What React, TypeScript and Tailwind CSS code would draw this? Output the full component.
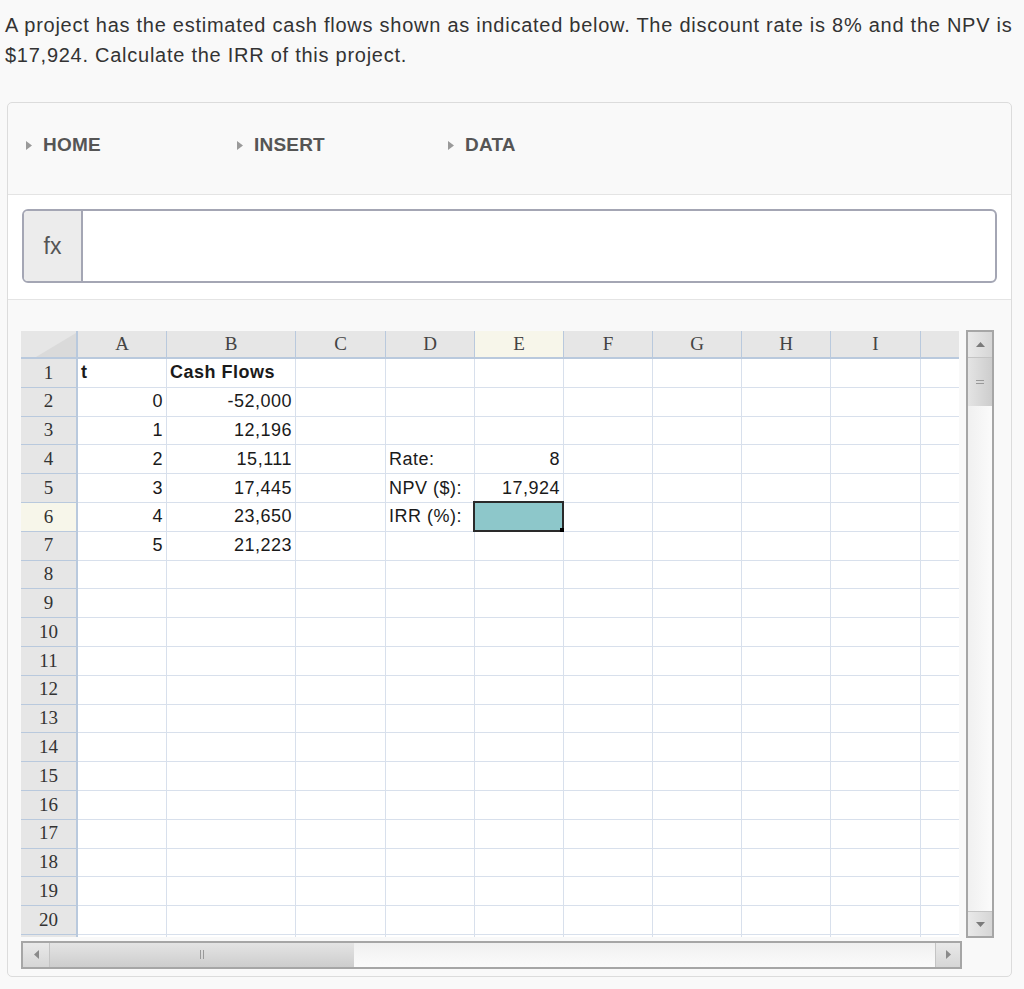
import React from 'react';

const colWidths = [57, 89, 129, 90, 89, 89, 89, 89, 89, 90, 38];
const colLabels = ['', 'A', 'B', 'C', 'D', 'E', 'F', 'G', 'H', 'I', ''];

type Cell = { text: string; align?: 'left' | 'right'; bold?: boolean };

const data: Record<string, Cell> = {
  '1-1': { text: 't', bold: true },
  '1-2': { text: 'Cash Flows', bold: true },
  '2-1': { text: '0', align: 'right' },
  '2-2': { text: '-52,000', align: 'right' },
  '3-1': { text: '1', align: 'right' },
  '3-2': { text: '12,196', align: 'right' },
  '4-1': { text: '2', align: 'right' },
  '4-2': { text: '15,111', align: 'right' },
  '5-1': { text: '3', align: 'right' },
  '5-2': { text: '17,445', align: 'right' },
  '6-1': { text: '4', align: 'right' },
  '6-2': { text: '23,650', align: 'right' },
  '7-1': { text: '5', align: 'right' },
  '7-2': { text: '21,223', align: 'right' },
  '4-4': { text: 'Rate:' },
  '4-5': { text: '8', align: 'right' },
  '5-4': { text: 'NPV ($):' },
  '5-5': { text: '17,924', align: 'right' },
  '6-4': { text: 'IRR (%):' },
};

const Tab = ({ label }: { label: string }) => (
  <div className="flex w-[211px] items-center">
    <svg width="6" height="9" viewBox="0 0 6 9" className="shrink-0">
      <polygon points="0,0 6,4.5 0,9" fill="#9a9a9a" />
    </svg>
    <span className="ml-[11px] text-[19px] font-bold text-[#555] leading-[22px] tracking-[0.2px]">{label}</span>
  </div>
);

const HeaderRow = () => (
  <>
    {colLabels.map((l, i) => {
      if (i === 0) {
        return (
          <div key={i} className="relative bg-[#e6e6e6] border-r-2 border-b-2 border-[#b9c9dd]">
            <svg className="absolute right-0 bottom-0" width="40" height="24" viewBox="0 0 40 24">
              <polygon points="40,0 40,24 0,24" fill="#dadada" />
            </svg>
          </div>
        );
      }
      return (
        <div
          key={i}
          className={`flex items-center justify-center border-b-2 border-[#b9c9dd] ${i < 10 ? 'border-r border-r-[#b9c9dd]' : ''} ${l === 'E' ? 'bg-[#f7f6ea]' : 'bg-[#e6e6e6]'} font-['Liberation_Serif',serif] text-[19px] text-[#444]`}
        >
          {l}
        </div>
      );
    })}
  </>
);

const DataRow = ({ r }: { r: number }) => (
  <>
    {colWidths.map((_, c) => {
      if (c === 0) {
        return (
          <div
            key={c}
            className={`flex items-center justify-center border-r-2 border-b border-[#b9c9dd] ${r === 6 ? 'bg-[#f7f6ea]' : 'bg-[#e6e6e6]'} font-['Liberation_Serif',serif] text-[19px] text-[#333]`}
          >
            {r}
          </div>
        );
      }
      const cell = data[`${r}-${c}`];
      const selected = r === 6 && c === 5;
      return (
        <div
          key={c}
          className={`relative flex items-center overflow-visible bg-white ${c < 10 ? 'border-r' : ''} border-b border-[#d8e0ec] px-[3px] ${cell?.align === 'right' ? 'justify-end' : 'justify-start'}`}
        >
          {cell && (
            <span className={`whitespace-nowrap text-[18px] tracking-[0.5px] text-[#1a1a1a] ${cell.bold ? 'font-bold' : ''}`}>
              {cell.text}
            </span>
          )}
          {selected && (
            <div className="absolute -left-[2px] -top-[2px] -right-[1px] -bottom-[1px] border-2 border-[#2a2a2a] bg-[#8dc7ca]">
              <div className="absolute -right-[4px] -bottom-[4px] h-[6px] w-[6px] bg-black" />
            </div>
          )}
        </div>
      );
    })}
  </>
);

const VScroll = () => (
  <div className="flex h-[608px] w-[28px] flex-col border-2 border-[#a6a6a6] bg-gradient-to-r from-[#f0f0f0] to-[#fbfbfb]">
    <div className="flex h-[26px] items-center justify-center border-b border-[#c4c4c4] bg-gradient-to-r from-[#e9e9e9] to-[#d6d6d6]">
      <svg width="9" height="5" viewBox="0 0 9 5"><polygon points="0,5 4.5,0 9,5" fill="#7a7a7a" /></svg>
    </div>
    <div className="flex h-[48px] items-center justify-center bg-gradient-to-r from-[#e4e4e4] to-[#cdcdcd]">
      <div className="flex flex-col gap-[2px]">
        <div className="h-[1px] w-[8px] bg-[#999]" />
        <div className="h-[1px] w-[8px] bg-[#999]" />
      </div>
    </div>
    <div className="flex-1" />
    <div className="flex h-[25px] items-center justify-center border-t border-[#c4c4c4] bg-gradient-to-r from-[#e9e9e9] to-[#d6d6d6]">
      <svg width="9" height="5" viewBox="0 0 9 5"><polygon points="0,0 9,0 4.5,5" fill="#7a7a7a" /></svg>
    </div>
  </div>
);

const HScroll = () => (
  <div className="mt-[4px] flex h-[28px] w-[941px] border-2 border-[#a6a6a6] bg-gradient-to-b from-[#f0f0f0] to-[#fbfbfb]">
    <div className="flex w-[27px] items-center justify-center border-r border-[#c4c4c4] bg-gradient-to-b from-[#e9e9e9] to-[#d6d6d6]">
      <svg width="5" height="9" viewBox="0 0 5 9"><polygon points="5,0 0,4.5 5,9" fill="#8a8a8a" /></svg>
    </div>
    <div className="flex w-[304px] items-center justify-center bg-gradient-to-b from-[#e4e4e4] to-[#cdcdcd]">
      <div className="flex gap-[2px]">
        <div className="h-[9px] w-[1px] bg-[#999]" />
        <div className="h-[9px] w-[1px] bg-[#999]" />
      </div>
    </div>
    <div className="flex-1" />
    <div className="flex w-[25px] items-center justify-center border-l border-[#c4c4c4] bg-gradient-to-b from-[#e9e9e9] to-[#d6d6d6]">
      <svg width="5" height="9" viewBox="0 0 5 9"><polygon points="0,0 5,4.5 0,9" fill="#8a8a8a" /></svg>
    </div>
  </div>
);

export default function App() {
  return (
    <div className="min-h-[989px] bg-[#f9f9f9] font-['Liberation_Sans',Arial,sans-serif]">
      <p className="px-[5px] pt-[10px] text-[20px] leading-[30px] tracking-[0.74px] text-[#333]">
        A project has the estimated cash flows shown as indicated below. The discount rate is 8% and the NPV is $17,924. Calculate the IRR of this project.
      </p>

      <div className="ml-[7px] mr-[12px] mt-[32px] overflow-hidden rounded-[5px] border border-[#dcdcdc] bg-[#f9f9f9]">
        {/* toolbar */}
        <div className="flex h-[92px] items-start border-b border-[#e4e4e4] pl-[18px] pt-[31px]">
          <Tab label="HOME" />
          <Tab label="INSERT" />
          <Tab label="DATA" />
        </div>

        {/* formula bar */}
        <div className="border-b border-[#e4e4e4] bg-white px-[14px] pb-[16px] pt-[14px]">
          <div className="flex h-[74px] overflow-hidden rounded-[6px] border-2 border-[#a4a6b4] bg-white">
            <div className="flex w-[59px] items-center justify-center border-r-2 border-[#a4a6b4] bg-[#ececec] text-[23px] text-[#555]">
              fx
            </div>
            <div className="flex-1" />
          </div>
        </div>

        {/* sheet */}
        <div className="flex gap-[4px] pb-[7px] pl-[13px] pt-[30px]">
          <div className="flex flex-col pt-[1px]">
            <div className="grid w-[938px] grid-cols-[57px_89px_129px_90px_89px_89px_89px_89px_89px_90px_38px] grid-rows-[28px_repeat(20,28.8px)_2px] overflow-hidden">
              <HeaderRow />
              {Array.from({ length: 20 }, (_, i) => (
                <DataRow key={i} r={i + 1} />
              ))}
              {colWidths.map((_, c) => (
                <div
                  key={c}
                  className={c === 0 ? 'bg-[#e6e6e6] border-r-2 border-[#b9c9dd]' : `bg-white ${c < 10 ? 'border-r border-[#d8e0ec]' : ''}`}
                />
              ))}
            </div>
            <HScroll />
          </div>
          <VScroll />
        </div>
      </div>
    </div>
  );
}
